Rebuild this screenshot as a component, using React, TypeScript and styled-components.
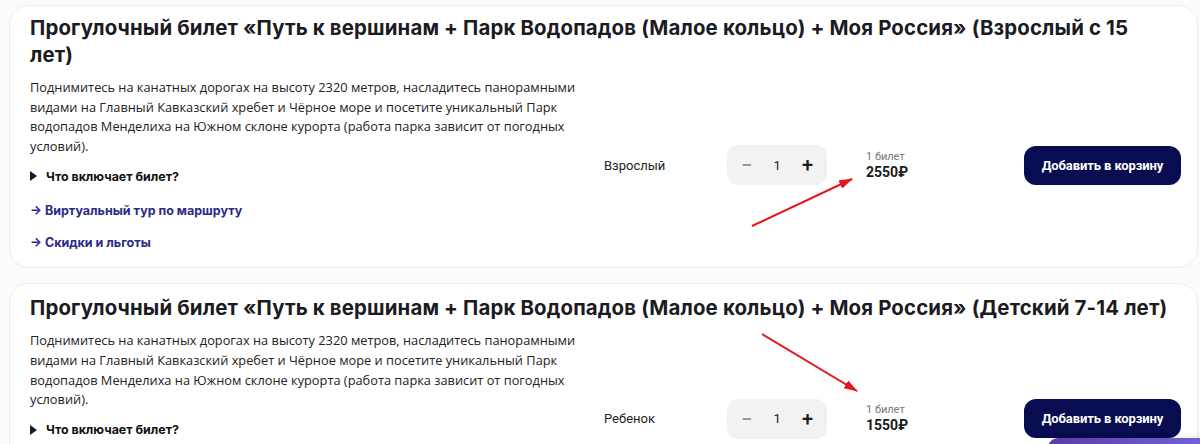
import React from "react";
import styled, { createGlobalStyle } from "styled-components";

const GlobalStyle = createGlobalStyle`
  html, body { margin: 0; padding: 0; }
  body {
    background: #fbfbfb;
    font-family: "Open Sans", "Noto Sans", sans-serif;
    color: #1d1d1f;
  }
  * { box-sizing: border-box; }
`;

const Page = styled.div`
  position: relative;
  width: 1200px;
  height: 444px;
  overflow: hidden;
  padding: 5px 2px 0 9px;
  display: flex;
  flex-direction: column;
  gap: 15px;
`;

const Card = styled.section<{ $extraTop?: number }>`
  flex-shrink: 0;
  background: #fff;
  border: 1px solid #ececec;
  border-radius: 20px;
  padding: ${(p) => 8 + (p.$extraTop ?? 0)}px 20px 15px 20px;
`;

const Title = styled.h2`
  margin: 0;
  max-width: 1140px;
  font-family: Inter, "Noto Sans", sans-serif;
  font-weight: 700;
  font-size: 20.4px;
  line-height: 27px;
  letter-spacing: 0.15px;
  color: #1b1b22;
`;

const Body = styled.div`
  display: grid;
  grid-template-columns: 574px 1fr;
  align-items: center;
  margin-top: 10px;
`;

const Left = styled.div`
  display: flex;
  flex-direction: column;
`;

const Description = styled.p`
  margin: 0;
  font-size: 12.8px;
  line-height: 19.6px;
  color: #222;
`;

const Details = styled.div`
  display: flex;
  align-items: center;
  gap: 9px;
  margin-top: 10px;
  height: 20px;
  font-family: Inter, "Noto Sans", sans-serif;
  font-weight: 700;
  font-size: 12.4px;
  color: #111;
`;

const Triangle = styled.span`
  width: 0;
  height: 0;
  border-top: 5px solid transparent;
  border-bottom: 5px solid transparent;
  border-left: 7px solid #1a1a1a;
`;

const Links = styled.div`
  display: flex;
  flex-direction: column;
  gap: 12px;
  margin-top: 14px;
`;

const LinkItem = styled.a`
  display: flex;
  align-items: center;
  gap: 4px;
  height: 20px;
  font-family: Inter, "Noto Sans", sans-serif;
  font-weight: 700;
  font-size: 12.5px;
  color: #2c2a86;
  text-decoration: none;
`;

const Right = styled.div`
  display: grid;
  grid-template-columns: 123px 100px 39px 158px 157px;
  align-items: center;
`;

const Label = styled.span`
  font-family: Roboto, "Noto Sans", sans-serif;
  font-size: 13px;
  color: #222;
`;

const Counter = styled.div`
  display: flex;
  align-items: center;
  justify-content: space-between;
  height: 40px;
  padding: 0 14px 0 14px;
  background: #f2f2f3;
  border-radius: 11px;
  font-family: Roboto, "Noto Sans", sans-serif;
`;

const CountBtn = styled.span<{ $muted?: boolean }>`
  font-size: 20px;
  font-weight: 500;
  line-height: 1;
  color: ${(p) => (p.$muted ? "#9a9a9a" : "#1a1a1a")};
`;

const Count = styled.span`
  font-size: 13px;
  color: #1a1a1a;
`;

const Price = styled.div`
  grid-column: 4;
  display: flex;
  flex-direction: column;
  font-family: Roboto, "Noto Sans", sans-serif;
`;

const PriceNote = styled.span`
  font-size: 11px;
  line-height: 14px;
  color: #777;
`;

const PriceValue = styled.span`
  font-size: 14px;
  line-height: 17px;
  font-weight: 700;
  color: #1a1a1a;
`;

const AddButton = styled.button`
  height: 39px;
  border: none;
  border-radius: 12px;
  background: #080c50;
  color: #fff;
  font-family: Roboto, "Noto Sans", sans-serif;
  font-weight: 700;
  font-size: 13px;
  letter-spacing: -0.1px;
  cursor: pointer;
`;

const ArrowSvg = styled.svg`
  position: absolute;
  left: 0;
  top: 0;
  pointer-events: none;
`;

const Widget = styled.div`
  position: absolute;
  left: 1048px;
  top: 438px;
  width: 160px;
  height: 40px;
  border-radius: 10px 0 0 0;
  background: linear-gradient(90deg, #5b3ca6 0%, #7264d4 100%);
  box-shadow: 0 -2px 6px rgba(0, 0, 0, 0.08);
`;

const desc =
  "Поднимитесь на канатных дорогах на высоту 2320 метров, насладитесь панорамными видами на Главный Кавказский хребет и Чёрное море и посетите уникальный Парк водопадов Менделиха на Южном склоне курорта (работа парка зависит от погодных условий).";

type Ticket = { title: string; label: string; price: string; extraTop: number };

const tickets: Ticket[] = [
  {
    title:
      "Прогулочный билет «Путь к вершинам + Парк Водопадов (Малое кольцо) + Моя Россия» (Взрослый с 15 лет)",
    label: "Взрослый",
    price: "2550₽",
    extraTop: 0,
  },
  {
    title:
      "Прогулочный билет «Путь к вершинам + Парк Водопадов (Малое кольцо) + Моя Россия» (Детский 7-14 лет)",
    label: "Ребенок",
    price: "1550₽",
    extraTop: 2,
  },
];

const TicketCard = ({ t }: { t: Ticket }) => (
  <Card $extraTop={t.extraTop}>
    <Title>{t.title}</Title>
    <Body>
      <Left>
        <Description>{desc}</Description>
        <Details>
          <Triangle />
          Что включает билет?
        </Details>
        <Links>
          <LinkItem href="#">→ Виртуальный тур по маршруту</LinkItem>
          <LinkItem href="#">→ Скидки и льготы</LinkItem>
        </Links>
      </Left>
      <Right>
        <Label>{t.label}</Label>
        <Counter>
          <CountBtn $muted>−</CountBtn>
          <Count>1</Count>
          <CountBtn>+</CountBtn>
        </Counter>
        <Price>
          <PriceNote>1 билет</PriceNote>
          <PriceValue>{t.price}</PriceValue>
        </Price>
        <AddButton>Добавить в корзину</AddButton>
      </Right>
    </Body>
  </Card>
);

export default function App() {
  return (
    <>
      <GlobalStyle />
      <Page>
        {tickets.map((t) => (
          <TicketCard key={t.label} t={t} />
        ))}
        <ArrowSvg width="1200" height="444" viewBox="0 0 1200 444">
          <defs>
            <marker id="ah" markerWidth="14" markerHeight="9" refX="13" refY="4.5" orient="auto" markerUnits="userSpaceOnUse">
              <path d="M0,0 L14,4.5 L0,9 Z" fill="#e3161b" />
            </marker>
          </defs>
          <line x1="752" y1="226" x2="852" y2="179" stroke="#e3161b" strokeWidth="2" markerEnd="url(#ah)" />
          <line x1="762" y1="334" x2="857" y2="391" stroke="#e3161b" strokeWidth="2" markerEnd="url(#ah)" />
        </ArrowSvg>
        <Widget />
      </Page>
    </>
  );
}
